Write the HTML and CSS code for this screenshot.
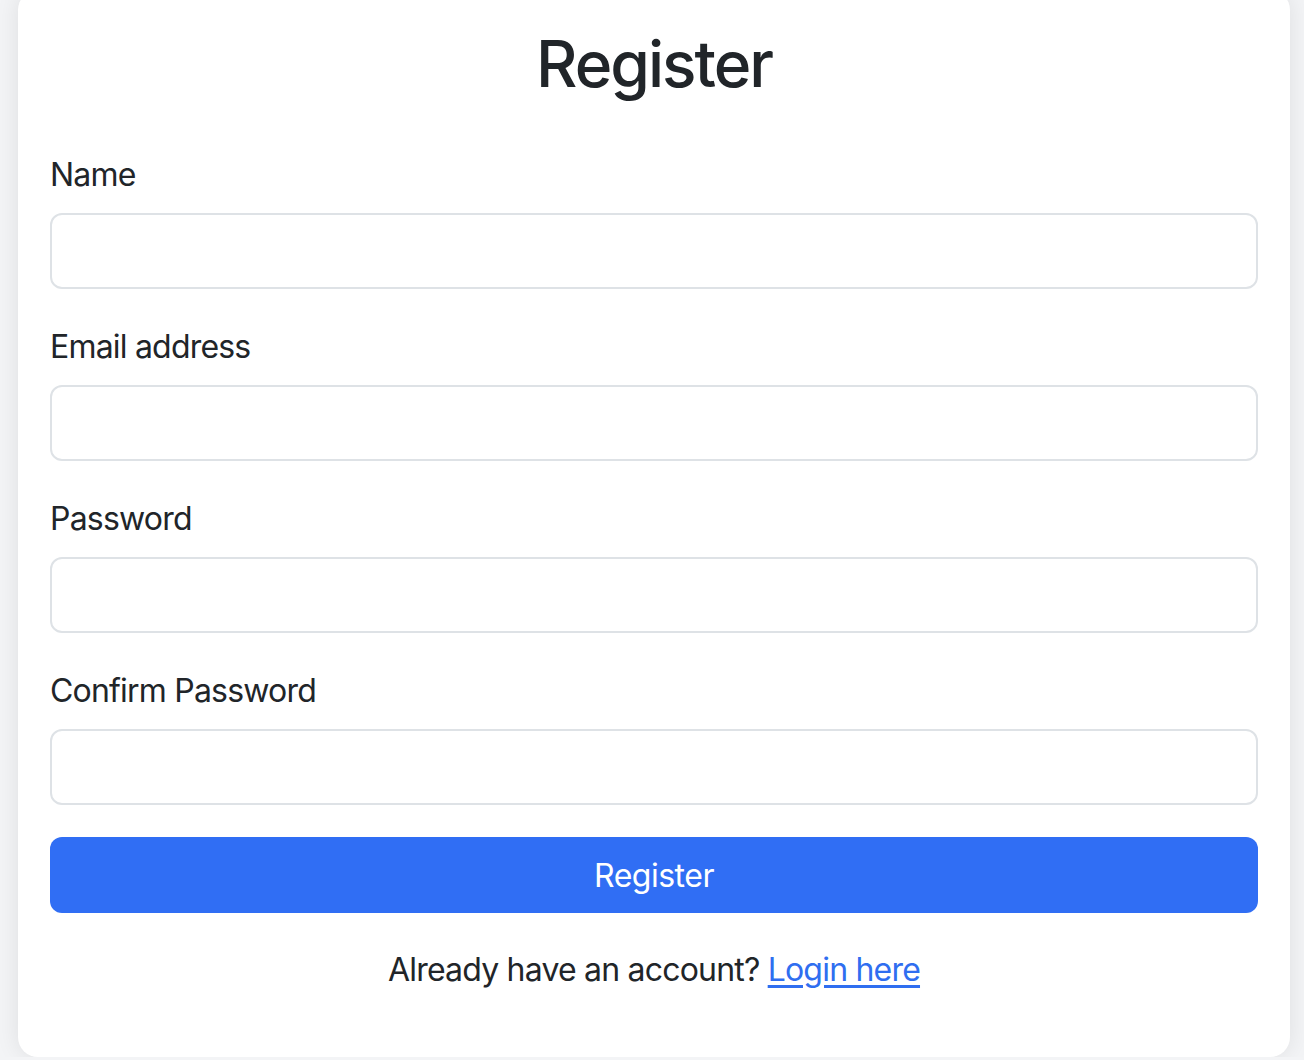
FILE: index.html
```html
<!DOCTYPE html>
<html lang="en">
<head>
<meta charset="utf-8">
<title>Register</title>
<link rel="stylesheet" href="styles.css">
</head>
<body>
<div class="page">
  <div class="card">
    <h1 class="title">Register</h1>
    <form class="form">
      <div class="group">
        <label class="label" for="name">Name</label>
        <input class="input" id="name" type="text">
      </div>
      <div class="group">
        <label class="label" for="email">Email address</label>
        <input class="input" id="email" type="email">
      </div>
      <div class="group">
        <label class="label" for="pw">Password</label>
        <input class="input" id="pw" type="password">
      </div>
      <div class="group">
        <label class="label" for="pw2">Confirm Password</label>
        <input class="input" id="pw2" type="password">
      </div>
      <button class="btn" type="button">Register</button>
    </form>
    <p class="footer">Already have an account? <a class="link" href="#">Login here</a></p>
  </div>
</div>
</body>
</html>
```
FILE: styles.css
```css
* { box-sizing: border-box; }
html, body {
  margin: 0;
  padding: 0;
  background: #f3f4f6;
  font-family: Inter, "Liberation Sans", sans-serif;
  color: #212529;
  overflow: hidden;
}
.page {
  padding: 0 14px 0 18px;
  margin-top: -10px;
}
.card {
  background: #ffffff;
  border-radius: 20px;
  box-shadow: 0 0 24px rgba(0, 0, 0, 0.09);
  padding: 32px 32px 32px;
}
.title {
  margin: 3px 0 47px;
  font-size: 64px;
  line-height: 77px;
  font-weight: 500;
  letter-spacing: -2px;
  text-align: center;
}
.form { display: flex; flex-direction: column; }
.group { margin-bottom: 32px; display: flex; flex-direction: column; }
.label {
  font-size: 32px;
  line-height: 48px;
  letter-spacing: -0.8px;
  padding-top: 2px;
  margin-bottom: 14px;
}
.input {
  height: 76px;
  border: 2px solid #dee2e6;
  border-radius: 12px;
  background: #fff;
  font: inherit;
  font-size: 32px;
  padding: 0 24px;
  outline: none;
}
.btn {
  height: 76px;
  border: none;
  border-radius: 12px;
  background: #306ef4;
  color: #fff;
  font-family: inherit;
  font-size: 32px;
  letter-spacing: -0.5px;
  cursor: pointer;
}
.footer {
  margin: 33px 0 31px;
  text-align: center;
  font-size: 32px;
  line-height: 48px;
  letter-spacing: -0.8px;
}
.link { color: #2f6ef0; text-decoration: underline; text-underline-offset: 4px; }
```
